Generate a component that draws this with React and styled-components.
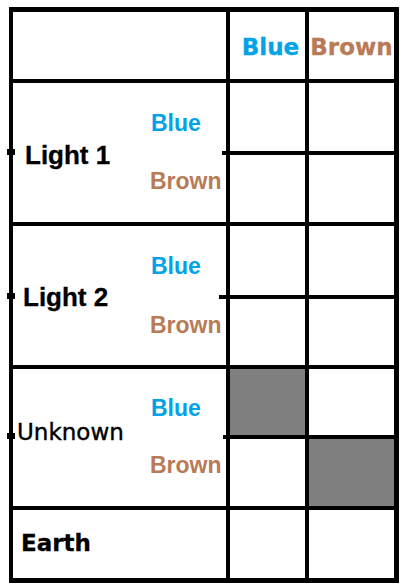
import React from 'react';
import styled, { createGlobalStyle } from 'styled-components';

const BLUE = '#00a2e8';
const BROWN = '#b97a57';

const GlobalStyle = createGlobalStyle`
  html, body {
    margin: 0;
    padding: 0;
    background: #fff;
  }
  body {
    width: 405px;
    height: 588px;
    overflow: hidden;
  }
`;

const Page = styled.div`
  padding: 7px 0 0 9px;
`;

const Table = styled.div`
  display: grid;
  grid-template-columns: 213px 75px 85px;
  grid-template-rows: 67px 68px 67px 69px 66px 66px 67px 68px;
  column-gap: 4px;
  row-gap: 4px;
  width: max-content;
  padding: 5px 5px 5px 4px;
  background: #000;
`;

const Cell = styled.div`
  background: ${props => (props.$filled ? '#7f7f7f' : '#fff')};
`;

const HeaderCell = styled.div`
  background: #fff;
  display: flex;
  align-items: center;
  justify-content: center;
  padding-left: ${props => props.$shift || 0}px;
  font-family: "DejaVu Sans", sans-serif;
  font-weight: 700;
  font-size: 23px;
  line-height: 1;
  color: ${props => props.$color};
  -webkit-text-stroke: 0.3px ${props => props.$color};

  span {
    transform: translateY(2px);
  }
`;

const SectionLabel = styled.div`
  grid-row: span 2;
  position: relative;
  background: #fff;
  display: grid;
  grid-template-columns: 137px 1fr;
  grid-template-rows: ${props => props.$split}px 1fr;
  row-gap: 4px;

  /* stub of the middle line next to the colour columns */
  &::before {
    content: '';
    position: absolute;
    right: 0;
    top: ${props => props.$split}px;
    width: ${props => props.$stub}px;
    height: 4px;
    background: #000;
  }

  /* small tick sticking out of the left border */
  &::after {
    content: '';
    position: absolute;
    left: -6px;
    top: ${props => props.$split - 2}px;
    width: 8px;
    height: 6px;
    background: #000;
  }
`;

const Name = styled.div`
  grid-column: 1;
  grid-row: 1 / span 2;
  align-self: center;
  padding-left: ${props => props.$x}px;
  transform: translateY(${props => props.$dy}px);
  color: #000;
  line-height: 1;
  white-space: nowrap;
  font-family: ${props => (props.$plain ? '"DejaVu Sans", sans-serif' : '"Liberation Sans", Arial, sans-serif')};
  font-weight: ${props => (props.$plain ? 400 : 700)};
  font-size: ${props => (props.$plain ? 23 : 26)}px;
  -webkit-text-stroke: ${props => (props.$plain ? '0.4px' : '0.3px')} #000;
`;

const SubLabel = styled.div`
  grid-column: 2;
  grid-row: ${props => props.$row};
  align-self: center;
  padding-left: ${props => props.$x || 0}px;
  transform: translateY(${props => props.$dy}px);
  font-family: "Liberation Sans", Arial, sans-serif;
  font-weight: 700;
  font-size: 23px;
  line-height: 1;
  color: ${props => props.$color};
`;

const EarthLabel = styled.div`
  background: #fff;
  display: flex;
  align-items: center;
  padding-left: 8px;
  font-family: "DejaVu Sans", sans-serif;
  font-weight: 700;
  font-size: 23px;
  line-height: 1;
  color: #000;
  -webkit-text-stroke: 0.3px #000;

  span {
    transform: translateY(-1px);
  }
`;

const sections = [
    { name: 'Light 1', x: 12, dy: 2, split: 68, stub: 4, plain: false, gray: [] },
    { name: 'Light 2', x: 10, dy: 1, split: 69, stub: 7, plain: false, gray: [] },
    { name: 'Unknown', x: 4, dy: -5, split: 66, stub: 3, plain: true, gray: ['top-blue', 'bottom-brown'] },
];

const App = () => {
    return (
        <>
            <GlobalStyle />
            <Page>
                <Table>
                    <Cell />
                    <HeaderCell $color={BLUE} $shift={6}><span>Blue</span></HeaderCell>
                    <HeaderCell $color={BROWN}><span>Brown</span></HeaderCell>

                    {sections.map((section) => (
                        <React.Fragment key={section.name}>
                            <SectionLabel $split={section.split} $stub={section.stub}>
                                <Name $x={section.x} $dy={section.dy} $plain={section.plain}>
                                    {section.name}
                                </Name>
                                <SubLabel $row={1} $dy={6} $x={1} $color={BLUE}>Blue</SubLabel>
                                <SubLabel $row={2} $dy={-7} $color={BROWN}>Brown</SubLabel>
                            </SectionLabel>
                            <Cell $filled={section.gray.includes('top-blue')} />
                            <Cell $filled={section.gray.includes('top-brown')} />
                            <Cell $filled={section.gray.includes('bottom-blue')} />
                            <Cell $filled={section.gray.includes('bottom-brown')} />
                        </React.Fragment>
                    ))}

                    <EarthLabel><span>Earth</span></EarthLabel>
                    <Cell />
                    <Cell />
                </Table>
            </Page>
        </>
    );
};

export default App;
